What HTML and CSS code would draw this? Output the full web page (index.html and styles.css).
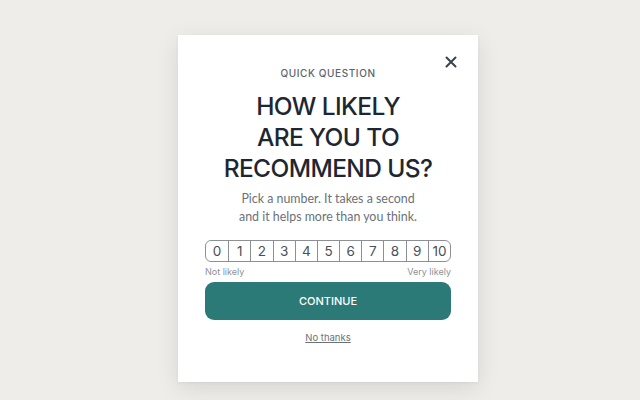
FILE: index.html
```html
<!DOCTYPE html>
<html>
<head>
<meta charset="utf-8">
<link rel="stylesheet" href="styles.css">
</head>
<body>
<div class="page">
  <div class="card">
    <button class="close" aria-label="Close">
      <svg width="12" height="12" viewBox="0 0 12 12"><path d="M1.5 1.5L10.5 10.5M10.5 1.5L1.5 10.5" stroke="#3d434a" stroke-width="2" stroke-linecap="round"/></svg>
    </button>
    <div class="eyebrow">QUICK QUESTION</div>
    <h1 class="title">HOW LIKELY<br>ARE YOU TO<br>RECOMMEND US?</h1>
    <p class="sub">Pick a number. It takes a second<br>and it helps more than you think.</p>
    <div class="scale">
      <span class="cell">0</span><span class="cell">1</span><span class="cell">2</span><span class="cell">3</span><span class="cell">4</span><span class="cell">5</span><span class="cell">6</span><span class="cell">7</span><span class="cell">8</span><span class="cell">9</span><span class="cell">10</span>
    </div>
    <div class="labels"><span>Not likely</span><span>Very likely</span></div>
    <button class="cta">CONTINUE</button>
    <a class="skip" href="#">No thanks</a>
  </div>
</div>
</body>
</html>
```
FILE: styles.css
```css
* { box-sizing: border-box; }
html, body { margin: 0; padding: 0; }
body {
  background: #eeede9;
  font-family: "Inter", "Noto Sans", sans-serif;
  width: 640px;
  height: 400px;
  overflow: hidden;
}
.page {
  display: flex;
  justify-content: center;
  padding: 35px 0 0 16px;
}
.card {
  position: relative;
  width: 300px;
  height: 347px;
  background: #ffffff;
  box-shadow: 0 6px 22px rgba(0,0,0,0.10), 0 1px 3px rgba(0,0,0,0.05);
  display: flex;
  flex-direction: column;
  align-items: center;
  padding: 32px 27px 0;
}
.close {
  position: absolute;
  top: 21px;
  right: 21px;
  width: 12px;
  height: 12px;
  padding: 0;
  border: 0;
  background: none;
  display: flex;
}
.eyebrow {
  font-size: 10px;
  font-weight: 500;
  letter-spacing: 0.6px;
  color: #5b6470;
  line-height: 12px;
}
.title {
  margin: 12px 0 0;
  font-size: 24.5px;
  font-weight: 500;
  line-height: 31px;
  color: #1e2731;
  text-align: center;
  letter-spacing: -0.6px;
}
.sub {
  margin: 6px 0 0;
  font-family: "Lato", "Inter", sans-serif;
  font-size: 12.4px;
  line-height: 18px;
  color: #6b7178;
  text-align: center;
}
.scale {
  margin-top: 14px;
  width: 246px;
  height: 22px;
  display: grid;
  grid-template-columns: repeat(11, 1fr);
  border: 1px solid #8b9097;
  border-radius: 6px;
  overflow: hidden;
}
.cell {
  display: flex;
  align-items: center;
  justify-content: center;
  font-size: 13.5px;
  color: #4a5058;
  border-left: 1px solid #8b9097;
}
.cell:first-child { border-left: 0; }
.labels {
  width: 246px;
  display: flex;
  justify-content: space-between;
  font-size: 9px;
  color: #8d9299;
  margin-top: 4px;
  line-height: 12px;
}
.cta {
  margin-top: 4px;
  width: 246px;
  height: 38px;
  border: 0;
  border-radius: 9px;
  background: #2b7a78;
  color: #ffffff;
  font-family: inherit;
  font-size: 11px;
  font-weight: 500;
  letter-spacing: 0;
}
.skip {
  margin-top: 11px;
  font-size: 9.5px;
  color: #6b7178;
  text-decoration: underline;
  line-height: 14px;
}
```
